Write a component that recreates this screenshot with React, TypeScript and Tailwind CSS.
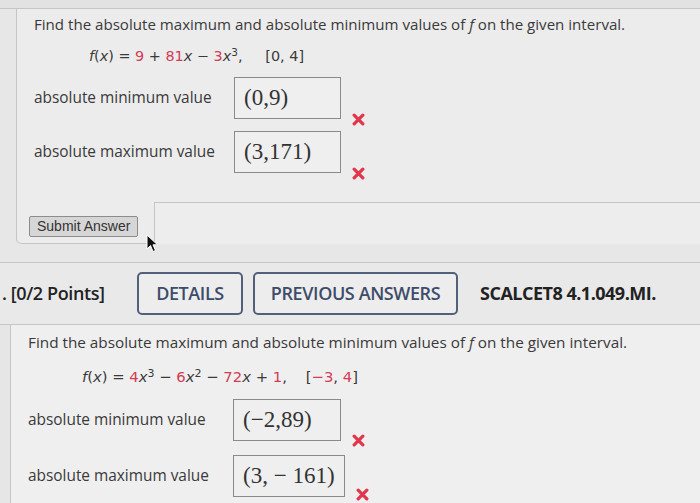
import * as React from 'react';

const red = 'text-[#d23c55]';

const XMark = () => (
  <svg width="13" height="13" viewBox="0 0 12 12" className="block">
    <path d="M2 2 L10 10 M10 2 L2 10" stroke="#e1364b" strokeWidth="3" strokeLinecap="round" />
  </svg>
);

const AnswerRow = ({
  label,
  value,
  labelW,
  boxW,
  xShift,
  className,
}: {
  label: string;
  value: React.ReactNode;
  labelW: string;
  boxW: string;
  xShift: string;
  className?: string;
}) => (
  <div className={`flex items-center ${className ?? ''}`}>
    <div className={`${labelW} text-[15.4px] text-[#3a3a3a]`}>{label}</div>
    <div
      className={`${boxW} h-[42px] border border-[#8a8a8a] bg-[#efefef] pl-[9px] flex items-center text-[23px] text-[#333] font-['Liberation_Serif',serif]`}
    >
      {value}
    </div>
    <div className={`ml-[11px] self-end ${xShift}`}>
      <XMark />
    </div>
  </div>
);

const Cursor = () => (
  <svg
    width="14"
    height="20"
    viewBox="0 0 14 20"
    className="absolute left-[146px] top-[234px]"
  >
    <path d="M1 1 L1 15 L4.5 11.5 L7 17.5 L9.5 16.5 L7 10.8 L11.5 10.8 Z" fill="#111" stroke="#fff" strokeWidth="1" />
  </svg>
);

export default function App() {
  return (
    <div className="relative w-[700px] h-[503px] overflow-hidden bg-[#e7e7e7] font-['Open_Sans',sans-serif] text-[#3a3a3a]">
      {/* first question, lower part */}
      <div className="h-[8px] bg-[#e2e2e2]" />
      <div className="border-t border-[#c6c6c6] bg-[#e7e7e7]">
        <div className="ml-[16px] border-l border-[#c6c6c6] bg-[#ececec] rounded-bl-[5px]">
          <div className="pl-[17px] pt-[4px]">
            <div className="h-[22px] leading-[22px] text-[15.1px]">
              Find the absolute maximum and absolute minimum values of <i>f</i> on the given interval.
            </div>
            <div className="ml-[55px] mt-[10px] h-[22px] leading-[22px] font-['DejaVu_Sans',sans-serif] text-[14.4px]">
              <i>f</i>(<i>x</i>) = <span className={red}>9</span> + <span className={red}>81</span>
              <i>x</i> − <span className={red}>3</span>
              <i>x</i>
              <sup className="text-[10.5px]">3</sup>,&nbsp;&nbsp;&nbsp;&nbsp;&nbsp;[0, 4]
            </div>
            <AnswerRow
              className="mt-[10px]"
              label="absolute minimum value"
              labelW="w-[200px]"
              value="(0,9)"
              boxW="w-[107px]"
              xShift="mb-[-7px]"
            />
            <AnswerRow
              className="mt-[12px]"
              label="absolute maximum value"
              labelW="w-[200px]"
              value="(3,171)"
              boxW="w-[107px]"
              xShift="mb-[-7px]"
            />
          </div>
          <div className="mt-[29px] flex">
            <div className="w-[137px] h-[42px] border-b border-[#c6c6c6] rounded-bl-[5px] pl-[12px] pt-[11px]">
              <button className="h-[21px] px-[7px] border border-[#8c8c8c] bg-[#d6d6d6] rounded-[2px] text-[14px] leading-[19px] text-[#333] font-['Liberation_Sans',sans-serif]">
                Submit Answer
              </button>
            </div>
            <div className="flex-1 border-l border-t border-[#c6c6c6] bg-[#ededed]" />
          </div>
        </div>
      </div>

      {/* second question header */}
      <div className="mt-[18px] border-t border-[#c6c6c6] h-[62px] flex items-center bg-[#e9e9e9]">
        <div className="w-[137px] pl-[2px] text-[18px] font-semibold text-[#222] tracking-[-0.4px]">
          . [0/2 Points]
        </div>
        <div className="h-[43px] w-[106px] border-2 border-[#53607c] rounded-[5px] flex items-center justify-center text-[18px] font-semibold text-[#3e4c6a] bg-[#ededed] tracking-[-0.4px]">
          DETAILS
        </div>
        <div className="ml-[10px] h-[43px] w-[205px] border-2 border-[#53607c] rounded-[5px] flex items-center justify-center text-[18px] font-semibold text-[#3e4c6a] bg-[#ededed] tracking-[-0.4px]">
          PREVIOUS ANSWERS
        </div>
        <div className="ml-[22px] text-[18px] font-bold text-[#222] tracking-[-0.5px]">
          SCALCET8 4.1.049.MI.
        </div>
      </div>

      {/* second question body */}
      <div className="border-t border-[#c6c6c6] bg-[#e6e6e6]">
        <div className="ml-[10px] border-l border-[#c6c6c6] bg-[#efefef] pl-[17px] pt-[6px] h-[200px]">
          <div className="h-[22px] leading-[22px] text-[15.3px]">
            Find the absolute maximum and absolute minimum values of <i>f</i> on the given interval.
          </div>
          <div className="ml-[54px] mt-[13px] h-[22px] leading-[22px] font-['DejaVu_Sans',sans-serif] text-[14.8px]">
            <i>f</i>(<i>x</i>) = <span className={red}>4</span>
            <i>x</i>
            <sup className="text-[11px]">3</sup> − <span className={red}>6</span>
            <i>x</i>
            <sup className="text-[11px]">2</sup> − <span className={red}>72</span>
            <i>x</i> + <span className={red}>1</span>,&nbsp;&nbsp;&nbsp;&nbsp;[<span className={red}>−3</span>,{' '}
            <span className={red}>4</span>]
          </div>
          <AnswerRow
            className="mt-[11px]"
            label="absolute minimum value"
            labelW="w-[205px]"
            value="(−2,89)"
            boxW="w-[108px]"
            xShift="mb-[-6px]"
          />
          <AnswerRow
            className="mt-[14px]"
            label="absolute maximum value"
            labelW="w-[205px]"
            value="(3, − 161)"
            boxW="w-[112px]"
            xShift="mb-[-4px]"
          />
        </div>
      </div>

      <Cursor />
    </div>
  );
}
